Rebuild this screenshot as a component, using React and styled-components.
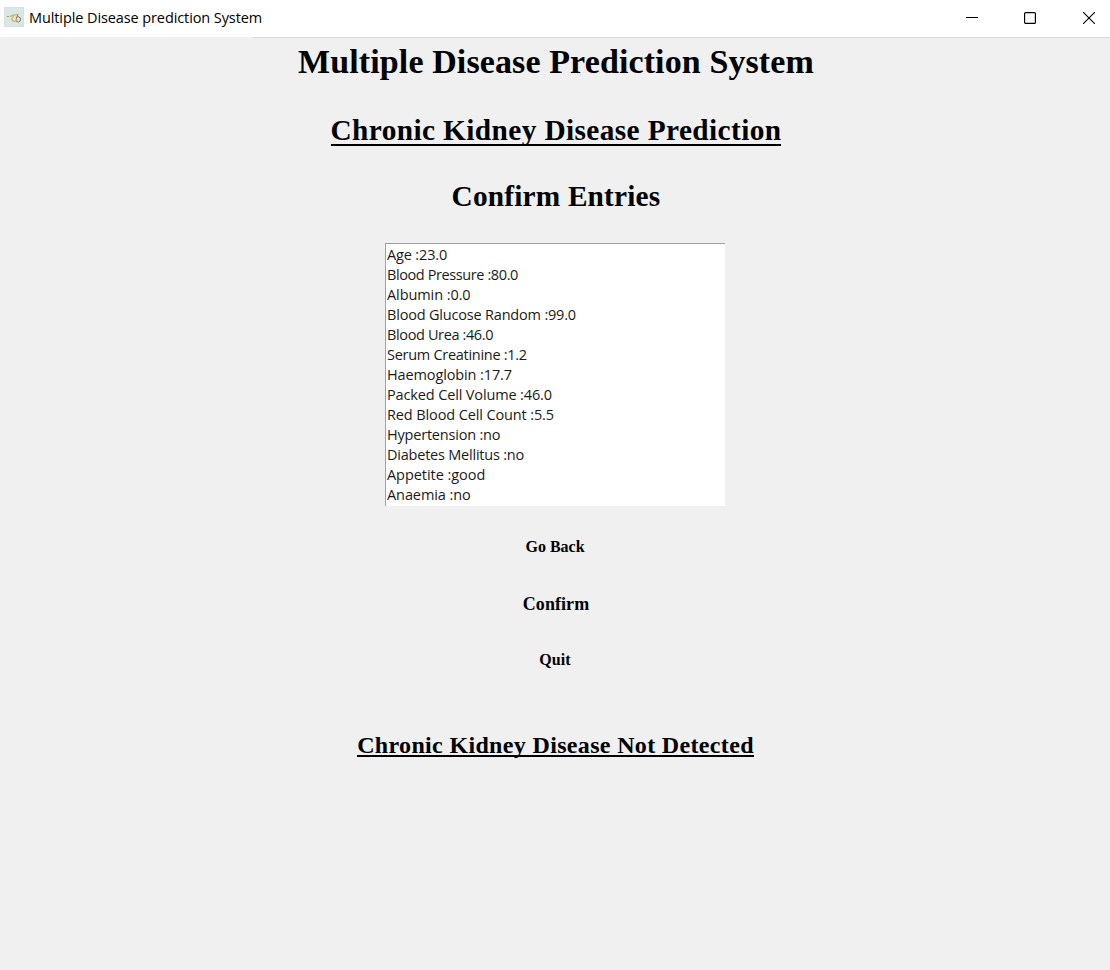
import React from "react";
import styled, { createGlobalStyle } from "styled-components";

const GlobalStyle = createGlobalStyle`
  * { box-sizing: border-box; }
  body { margin: 0; background: #f0f0f0; }
`;

const Window = styled.div`
  display: flex;
  flex-direction: column;
  width: 1110px;
  height: 970px;
  background: #f0f0f0;
  color: #000;
  overflow: hidden;
`;

const TitleBar = styled.header`
  display: flex;
  align-items: flex-start;
  height: 38px;
  padding: 0 0 0 4px;
  background: linear-gradient(90deg, #f0f0f0 253px, #d9d9d9 253px) bottom / 100% 1px no-repeat #fff;
`;

const IconSlot = styled.div`
  display: flex;
  padding-top: 7px;
`;

const WindowTitle = styled.span`
  flex: 1;
  margin: 8px 0 0 5px;
  font: 14.5px/20px "Open Sans", "Noto Sans", sans-serif;
  letter-spacing: -0.1px;
  white-space: nowrap;
`;

const Controls = styled.div`
  display: flex;
`;

const ControlButton = styled.button`
  display: flex;
  align-items: center;
  justify-content: center;
  width: ${(p) => p.$width || 58}px;
  height: 36px;
  margin-left: ${(p) => p.$gap || 0}px;
  padding: 0;
  border: 0;
  background: transparent;
`;

const Content = styled.main`
  display: flex;
  flex-direction: column;
  align-items: center;
  font-family: "Liberation Serif", serif;
  font-weight: 700;
`;

const Heading = styled.h1`
  margin: ${(p) => p.$top || 0}px 0 0;
  padding-left: ${(p) => p.$shift || 0}px;
  height: 40px;
  font-size: ${(p) => p.$size}px;
  line-height: 40px;
  letter-spacing: ${(p) => p.$spacing}px;
  white-space: nowrap;
`;

const Underlined = styled.span`
  display: block;
  height: ${(p) => p.$height}px;
  border-bottom: 2px solid #000;
`;

const EntryList = styled.ul`
  width: 340px;
  height: 263px;
  margin: 27px 0 0;
  padding: 1px 0 0;
  border-top: 1px solid #a0a0a0;
  border-left: 1px solid #a0a0a0;
  background: #fff;
  list-style: none;
  color: #1a1a1a;
  font: 400 14.5px/20px "Open Sans", "Noto Sans", sans-serif;
`;

const Entry = styled.li`
  height: 20px;
  padding-left: 1px;
  letter-spacing: ${(p) => p.$spacing}px;
  white-space: nowrap;
`;

const ActionButton = styled.button`
  height: 24px;
  margin-top: ${(p) => p.$top}px;
  padding: 0 0 0 ${(p) => p.$shift || 0}px;
  border: 0;
  background: transparent;
  color: #000;
  font: 700 ${(p) => p.$size}px/24px "Liberation Serif", serif;
  letter-spacing: ${(p) => p.$spacing || 0}px;
`;

const entries = [
  ["Age :23.0", -0.15],
  ["Blood Pressure :80.0", -0.4],
  ["Albumin :0.0", -0.08],
  ["Blood Glucose Random :99.0", -0.19],
  ["Blood Urea :46.0", -0.37],
  ["Serum Creatinine :1.2", -0.28],
  ["Haemoglobin :17.7", -0.12],
  ["Packed Cell Volume :46.0", -0.14],
  ["Red Blood Cell Count :5.5", -0.12],
  ["Hypertension :no", -0.2],
  ["Diabetes Mellitus :no", -0.22],
  ["Appetite :good", -0.05],
  ["Anaemia :no", -0.09],
];

function AppIcon() {
  return (
    <svg width="20" height="20" viewBox="0 0 20 20" fill="none">
      <rect width="20" height="20" fill="#d3e2e5" />
      <rect x="1" y="1" width="18" height="18" fill="#dbe7e7" />
      <path d="M3 9.5h2" stroke="#a79873" />
      <path d="M6 9.5l4-1.5 4-.5" stroke="#c9a44c" strokeWidth="1.2" />
      <path d="M9.5 9 7.5 12.5l2.5 2 2.5-1" stroke="#dcb450" strokeWidth="1.2" />
      <path d="M12 11l2-1.5 2.5 1.5-.3 3-1.7 1.2-2.5-1.2" stroke="#7d786a" />
      <path d="M14 7.5l-1.5 3-.5 3" stroke="#a58d52" />
    </svg>
  );
}

export default function App() {
  return (
    <Window>
      <GlobalStyle />
      <TitleBar>
        <IconSlot>
          <AppIcon />
        </IconSlot>
        <WindowTitle>Multiple Disease prediction System</WindowTitle>
        <Controls>
          <ControlButton aria-label="Minimize">
            <svg width="12" height="12" viewBox="0 0 12 12">
              <path d="M0 5.5h12" stroke="#000" />
            </svg>
          </ControlButton>
          <ControlButton aria-label="Maximize">
            <svg width="12" height="12" viewBox="0 0 12 12" fill="none">
              <rect x=".6" y=".6" width="10.8" height="10.8" rx="1" stroke="#000" strokeWidth="1.2" />
            </svg>
          </ControlButton>
          <ControlButton aria-label="Close" $width={42} $gap={9}>
            <svg width="12" height="12" viewBox="0 0 12 12">
              <path d="M0 0l12 12M12 0L0 12" stroke="#000" strokeWidth="1.1" />
            </svg>
          </ControlButton>
        </Controls>
      </TitleBar>
      <Content>
        <Heading $top={4} $shift={2} $size={34} $spacing={0.11}>Multiple Disease Prediction System</Heading>
        <Heading as="h2" $top={28} $shift={2} $size={29.33} $spacing={0.39}>
          <Underlined $height={36}>Chronic Kidney Disease Prediction</Underlined>
        </Heading>
        <Heading as="h2" $top={26} $shift={2} $size={29.33} $spacing={0.18}>Confirm Entries</Heading>
        <EntryList>
          {entries.map(([text, spacing]) => (
            <Entry key={text} $spacing={spacing}>{text}</Entry>
          ))}
        </EntryList>
        <ActionButton $top={29} $size={16}>Go Back</ActionButton>
        <ActionButton $top={33} $shift={2} $size={18} $spacing={0.08}>Confirm</ActionButton>
        <ActionButton $top={32} $size={16} $spacing={0.1}>Quit</ActionButton>
        <Heading as="h2" $top={53} $shift={1} $size={24} $spacing={0.34}>
          <Underlined $height={32}>Chronic Kidney Disease Not Detected</Underlined>
        </Heading>
      </Content>
    </Window>
  );
}
